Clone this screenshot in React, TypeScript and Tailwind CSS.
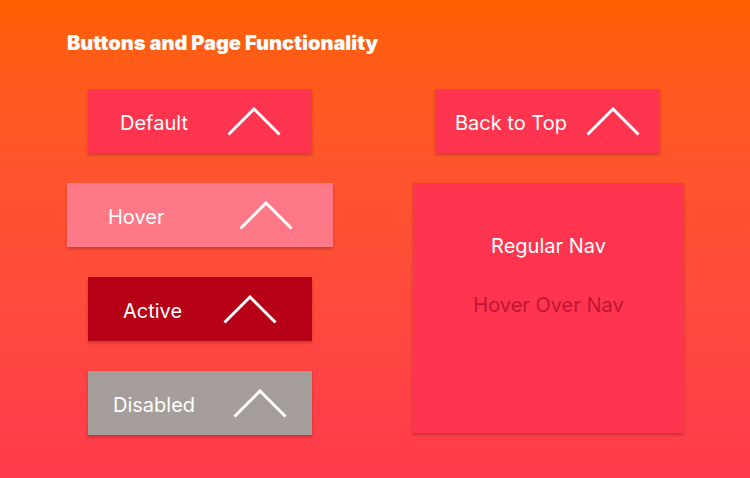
import React from "react";

function Chevron() {
  return (
    <svg width="54" height="29" viewBox="0 0 54 29" fill="none">
      <polyline points="1.5,27.5 27,2 52.5,27.5" stroke="#ffffff" strokeWidth="3" strokeLinecap="butt" />
    </svg>
  );
}

function Btn({ label, cls }: { label: string; cls: string }) {
  return (
    <div className={`flex h-16 items-center justify-between shadow-[0_2px_3px_rgba(0,0,0,0.22)] ${cls}`}>
      <span className="pt-[3px] text-[20px] leading-6 text-white">{label}</span>
      <Chevron />
    </div>
  );
}

export default function App() {
  return (
    <div
      className="h-[478px] w-[750px] bg-gradient-to-b from-[#FF6000] to-[#FF3A4C] overflow-hidden"
      style={{ fontFamily: "Inter, 'Noto Sans', sans-serif" }}
    >
      <h1 className="pl-[67px] pt-[31px] text-[20px] font-black leading-6 text-white">
        Buttons and Page Functionality
      </h1>

      <div className="mt-[34px] flex gap-20 pl-[67px]">
        <div className="flex w-[266px] flex-col gap-[30px]">
          <Btn label="Default" cls="ml-[21px] w-[224px] bg-[#FF3550] pl-8 pr-[31px]" />
          <Btn label="Hover" cls="w-[266px] bg-[#FF7887] pl-[41px] pr-[40px]" />
          <Btn label="Active" cls="ml-[21px] w-[224px] bg-[#B50016] pl-[35px] pr-[35px]" />
          <Btn label="Disabled" cls="ml-[21px] w-[224px] bg-[#A59E9A] pl-[25px] pr-[25px]" />
        </div>

        <div className="flex w-[271px] flex-col gap-[30px]">
          <Btn label="Back to Top" cls="ml-[22px] w-[225px] bg-[#FF3550] pl-5 pr-5" />
          <div className="flex h-[250px] flex-col items-center bg-[#FF3550] pt-[51px] shadow-[0_2px_3px_rgba(0,0,0,0.22)]">
            <span className="text-[20px] leading-6 text-white">Regular Nav</span>
            <span className="mt-[35px] text-[20px] leading-6 text-[#BE1535]">Hover Over Nav</span>
          </div>
        </div>
      </div>
    </div>
  );
}
